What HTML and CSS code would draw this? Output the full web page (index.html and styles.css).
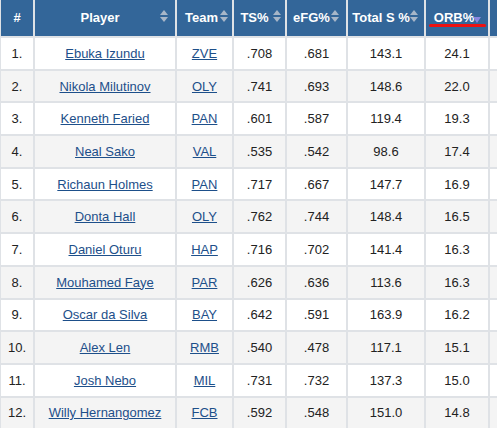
FILE: index.html
```html
<!DOCTYPE html>
<html lang="en">
<head>
<meta charset="UTF-8" />
<title>Player Stats</title>
<link rel="stylesheet" href="styles.css">
</head>
<body>
  <div class="table-wrap">
  <table class="stats">
    <thead>
      <tr>
        <th class="c-rank">#</th>
        <th class="c-player sortable">Player</th>
        <th class="c-team sortable">Team</th>
        <th class="c-ts sortable">TS%</th>
        <th class="c-efg sortable">eFG%</th>
        <th class="c-tot sortable">Total S %</th>
        <th class="c-orb sorted-desc"><span class="active-label">ORB%</span></th>
        <th class="c-more"></th>
      </tr>
    </thead>
    <tbody>
      <tr><td>1.</td><td><a href="#">Ebuka Izundu</a></td><td><a href="#">ZVE</a></td><td>.708</td><td>.681</td><td>143.1</td><td>24.1</td><td></td></tr>
      <tr><td>2.</td><td><a href="#">Nikola Milutinov</a></td><td><a href="#">OLY</a></td><td>.741</td><td>.693</td><td>148.6</td><td>22.0</td><td></td></tr>
      <tr><td>3.</td><td><a href="#">Kenneth Faried</a></td><td><a href="#">PAN</a></td><td>.601</td><td>.587</td><td>119.4</td><td>19.3</td><td></td></tr>
      <tr><td>4.</td><td><a href="#">Neal Sako</a></td><td><a href="#">VAL</a></td><td>.535</td><td>.542</td><td>98.6</td><td>17.4</td><td></td></tr>
      <tr><td>5.</td><td><a href="#">Richaun Holmes</a></td><td><a href="#">PAN</a></td><td>.717</td><td>.667</td><td>147.7</td><td>16.9</td><td></td></tr>
      <tr><td>6.</td><td><a href="#">Donta Hall</a></td><td><a href="#">OLY</a></td><td>.762</td><td>.744</td><td>148.4</td><td>16.5</td><td></td></tr>
      <tr><td>7.</td><td><a href="#">Daniel Oturu</a></td><td><a href="#">HAP</a></td><td>.716</td><td>.702</td><td>141.4</td><td>16.3</td><td></td></tr>
      <tr><td>8.</td><td><a href="#">Mouhamed Faye</a></td><td><a href="#">PAR</a></td><td>.626</td><td>.636</td><td>113.6</td><td>16.3</td><td></td></tr>
      <tr><td>9.</td><td><a href="#">Oscar da Silva</a></td><td><a href="#">BAY</a></td><td>.642</td><td>.591</td><td>163.9</td><td>16.2</td><td></td></tr>
      <tr><td>10.</td><td><a href="#">Alex Len</a></td><td><a href="#">RMB</a></td><td>.540</td><td>.478</td><td>117.1</td><td>15.1</td><td></td></tr>
      <tr><td>11.</td><td><a href="#">Josh Nebo</a></td><td><a href="#">MIL</a></td><td>.731</td><td>.732</td><td>137.3</td><td>15.0</td><td></td></tr>
      <tr><td>12.</td><td><a href="#">Willy Hernangomez</a></td><td><a href="#">FCB</a></td><td>.592</td><td>.548</td><td>151.0</td><td>14.8</td><td></td></tr>
    </tbody>
  </table>
  </div>
</body>
</html>
```

FILE: styles.css
```css
* {
  box-sizing: border-box;
}
body {
  margin: 0;
  background: #fff;
  font-family: "Liberation Sans", Arial, sans-serif;
}
.table-wrap {
  width: 497px;
  height: 428px;
  overflow: hidden;
}
.stats {
  border-collapse: collapse;
  table-layout: fixed;
  width: 520px;
  margin-left: -1px;
  margin-top: -1px;
  font-size: 13px;
  color: #222;
}
.stats th,
.stats td {
  border: 2px solid #dfe2e6;
  text-align: center;
  padding: 0;
}
.stats th {
  background: #336699;
  color: #fff;
  font-weight: bold;
  height: 38px;
  border-color: #dfe2e6;
  border-top: none;
  position: relative;
}
.stats td {
  height: 32.7px;
}
.stats tbody tr:nth-child(even) td {
  background: #f4f4f4;
}
.stats a {
  color: #1d4f8a;
}
.c-rank { width: 34px; }
.c-player { width: 142px; }
.c-team { width: 57px; }
.c-ts { width: 53px; }
.c-efg { width: 61px; }
.c-tot { width: 78px; }
.c-orb { width: 64px; }
.c-more { width: 40px; }

/* sort arrows */
.sortable {
  padding-right: 10px !important;
}
.sortable::before,
.sortable::after {
  content: "";
  position: absolute;
  right: 5px;
  border-left: 4px solid transparent;
  border-right: 4px solid transparent;
}
.sortable::before {
  top: 11px;
  border-bottom: 5px solid #a7b6c8;
}
.sortable::after {
  top: 18px;
  border-top: 5px solid #a7b6c8;
}
.c-player.sortable::before,
.c-player.sortable::after {
  right: 7px;
}
.c-team.sortable { padding-right: 6px !important; }
.c-team.sortable::before,
.c-team.sortable::after { right: 4px; }
.c-ts.sortable::before,
.c-ts.sortable::after { right: 4px; }
.c-efg.sortable::before,
.c-efg.sortable::after { right: 7px; }
.c-tot.sortable::before,
.c-tot.sortable::after { right: 6px; }

.sorted-desc {
  padding-right: 6px !important;
}
.sorted-desc::after {
  content: "";
  position: absolute;
  right: 7px;
  top: 18px;
  border-left: 4px solid transparent;
  border-right: 4px solid transparent;
  border-top: 6px solid #8a87e0;
}
.sorted-desc::before {
  content: "";
  position: absolute;
  left: 3px;
  right: 2px;
  top: 25px;
  height: 3px;
  border-radius: 2px;
  background: #ee1111;
}
```
